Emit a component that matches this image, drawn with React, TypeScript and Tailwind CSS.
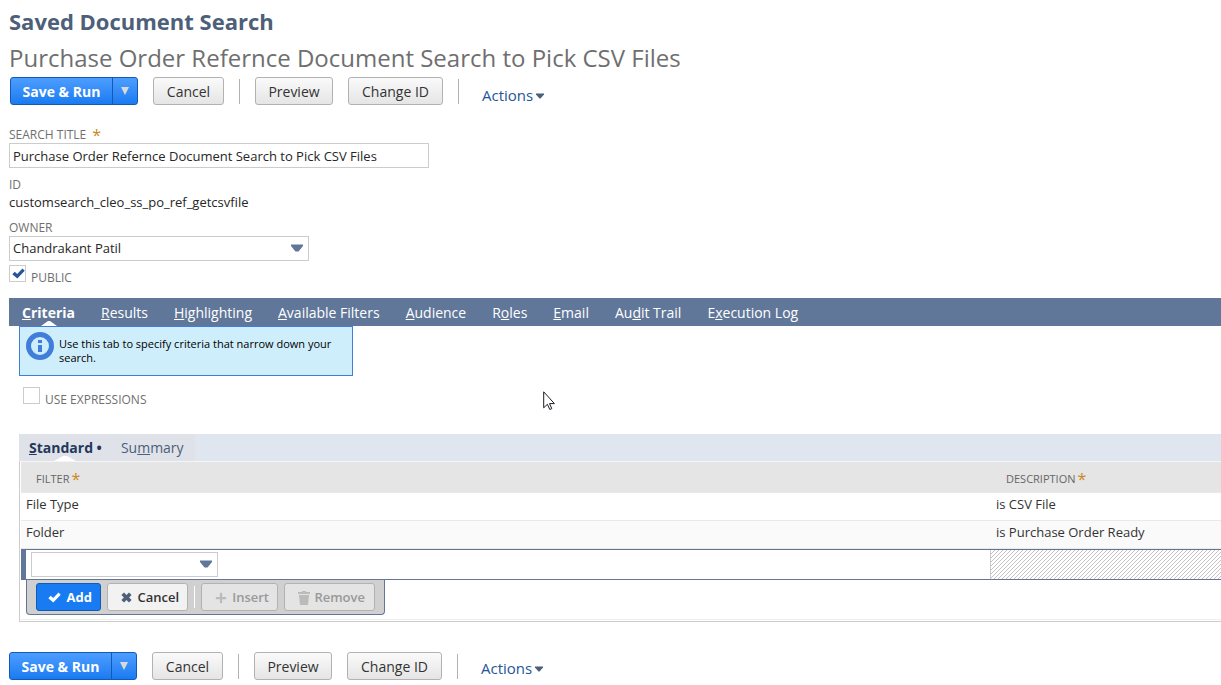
import React from 'react';
import { FaPlus } from 'react-icons/fa';

const tabs = [
  { before: '', key: 'C', after: 'riteria' },
  { before: '', key: 'R', after: 'esults' },
  { before: '', key: 'H', after: 'ighlighting' },
  { before: '', key: 'A', after: 'vailable Filters' },
  { before: '', key: 'A', after: 'udience' },
  { before: 'R', key: 'o', after: 'les' },
  { before: '', key: 'E', after: 'mail' },
  { before: 'Au', key: 'd', after: 'it Trail' },
  { before: 'E', key: 'x', after: 'ecution Log' },
];

const filters = [
  { filter: 'File Type', description: 'is CSV File' },
  { filter: 'Folder', description: 'is Purchase Order Ready' },
];

function CheckIcon({ className }: { className?: string }) {
  return (
    <svg width="13" height="11" viewBox="0 0 13 11" className={className}>
      <path d="M0.3 6.2L2.8 3.7l2.4 2.4L10.5 0.6 12.7 2.7 5.3 10.4z" fill="currentColor" />
    </svg>
  );
}

function CrossIcon() {
  return (
    <svg width="11" height="11" viewBox="0 0 11 11" className="text-[#4d5f79]">
      <path
        d="M3 0.4L5.5 2.9 8 0.4 10.6 3 8.1 5.5 10.6 8 8 10.6 5.5 8.1 3 10.6 0.4 8 2.9 5.5 0.4 3z"
        fill="currentColor"
      />
    </svg>
  );
}

function TrashIcon() {
  return (
    <svg width="12" height="14" viewBox="0 0 12 14" className="text-[#bbb]">
      <path d="M4 0h4v1h4v2H0V1h4zM1 4h10l-1 10H2z" fill="currentColor" />
    </svg>
  );
}

function GreyButton({ children, className }: { children: React.ReactNode; className: string }) {
  return (
    <button
      type="button"
      className={`h-7 pt-px rounded-[3px] border border-[#b2b2b2] bg-linear-to-b from-[#fafafa] to-[#e5e5e5] text-sm leading-none font-medium text-[#333] ${className}`}
    >
      {children}
    </button>
  );
}

function ButtonBar() {
  return (
    <div className="flex items-start">
      <div className="flex h-7 rounded-[3px] border border-[#125ab2] overflow-hidden bg-linear-to-b from-[#4c9dff] to-[#187bf2] text-white">
        <button type="button" className="w-[101px] pt-px text-sm leading-none font-bold">
          Save &amp; Run
        </button>
        <button
          type="button"
          aria-label="More save options"
          className="w-[25px] flex items-center justify-center border-l border-[#125ab2]"
        >
          <svg width="8" height="8" viewBox="0 0 8 8">
            <path d="M0 0h8L4 8z" fill="#d9d9d9" />
          </svg>
        </button>
      </div>
      <div className="ml-[15px]">
        <GreyButton className="min-w-[71px]">Cancel</GreyButton>
      </div>
      <div className="mx-[15px] mt-0.5 w-px h-[25px] bg-[#b2b2b2]" />
      <GreyButton className="min-w-[78px]">Preview</GreyButton>
      <div className="ml-[15px]">
        <GreyButton className="min-w-[95px]">Change ID</GreyButton>
      </div>
      <div className="ml-[15px] mt-0.5 w-px h-[25px] bg-[#b2b2b2]" />
    </div>
  );
}

function ActionsLink() {
  return (
    <a href="#actions" className="ml-[23px] flex items-center gap-[3px] text-[15px] leading-5 font-medium text-[#255599]">
      Actions
      <svg width="8" height="6" viewBox="0 0 8 6" className="mt-0.5">
        <path d="M0 0.5h8v1L4.5 5.5h-1L0 1.5z" fill="#4d5f79" />
      </svg>
    </a>
  );
}

function SelectArrow() {
  return (
    <svg
      width="12"
      height="8"
      viewBox="0 0 12 8"
      className="absolute right-1.5 top-2 pointer-events-none"
    >
      <path d="M0 0.5h12v1.5L7.5 7.5h-3L0 2z" fill="#607799" />
    </svg>
  );
}

function Required() {
  return <span className="text-base leading-none text-[#cc8822]">*</span>;
}

function InfoIcon() {
  return (
    <svg width="28" height="28" viewBox="0 0 28 28" className="shrink-0">
      <circle cx="14" cy="14" r="11.5" fill="none" stroke="#417ed9" strokeWidth="5" />
      <path d="M12 8h4v3h-4zM12 13h4v7h-4z" fill="#417ed9" />
    </svg>
  );
}

function Pointer() {
  return (
    <svg width="12" height="20" viewBox="0 0 12 20" className="fixed left-[543px] top-[391px] pointer-events-none">
      <path
        d="M0.7 0.8v16l3.7-3.5 2.4 5.2 2-0.9-2.3-5h4.9z"
        fill="#fff"
        stroke="#1c1c28"
        strokeWidth="1"
      />
    </svg>
  );
}

export default function App() {
  return (
    <div className="pl-[9px] pt-2 bg-white overflow-hidden text-[13px] text-[#262626] font-['Open_Sans','Noto_Sans',sans-serif]">
      <h1 className="text-[22px] leading-[26px] font-bold text-[#4d5f79]">Saved Document Search</h1>
      <h2 className="mt-2 text-2xl leading-8 text-[#6f6f6f]">
        Purchase Order Refernce Document Search to Pick CSV Files
      </h2>
      <div className="mt-[3px] ml-px flex items-center">
        <ButtonBar />
        <div className="pt-2">
          <ActionsLink />
        </div>
      </div>

      <form className="mt-[22px]" onSubmit={e => e.preventDefault()}>
        <label htmlFor="title" className="flex items-center gap-1.5 h-4 text-xs text-[#6f6f6f]">
          SEARCH TITLE <Required />
        </label>
        <input
          id="title"
          type="text"
          defaultValue="Purchase Order Refernce Document Search to Pick CSV Files"
          className="block w-[420px] h-[25px] px-[3px] border border-[#ccc] bg-white"
        />
        <div className="mt-[9px] h-4 text-xs leading-4 text-[#6f6f6f]">ID</div>
        <div className="h-[18px] leading-[18px]">customsearch_cleo_ss_po_ref_getcsvfile</div>
        <label htmlFor="owner" className="mt-[9px] block h-4 text-xs leading-4 text-[#6f6f6f]">
          OWNER
        </label>
        <div className="relative w-[300px]">
          <select
            id="owner"
            className="block w-full h-[25px] pt-px px-[3px] border border-[#ccc] bg-white appearance-none"
          >
            <option>Chandrakant Patil</option>
          </select>
          <SelectArrow />
        </div>
        <label className="relative mt-1 flex items-start gap-[5px] text-xs text-[#6f6f6f]">
          <input
            type="checkbox"
            defaultChecked
            className="size-[17px] border border-[#ccc] bg-white appearance-none"
          />
          <CheckIcon className="absolute left-[3px] top-[3px] text-[#255599]" />
          <span className="mt-[5px] leading-4">PUBLIC</span>
        </label>
      </form>

      <nav className="mt-3 flex gap-[26px] h-7 pl-[13px] bg-[#607799] text-sm text-white">
        {tabs.map((tab, i) => (
          <a
            key={tab.after}
            href="#tab"
            className={i === 0 ? 'relative leading-[29px] font-bold' : 'leading-[29px]'}
          >
            {tab.before}
            <span className="underline">{tab.key}</span>
            {tab.after}
            {i === 0 && (
              <svg width="16" height="5" viewBox="0 0 16 5" className="absolute bottom-0 left-[19px]">
                <path d="M0 5L7 0h2l7 5z" fill="#fff" />
              </svg>
            )}
          </a>
        ))}
      </nav>

      <div className="pl-2.5">
        <div className="flex gap-[5px] w-[334px] h-[50px] pl-1.5 pt-[5px] border border-[#417ed9] bg-[#cfeefc] text-[11px] leading-[14px] text-black">
          <InfoIcon />
          <p className="pt-[5px]">Use this tab to specify criteria that narrow down your search.</p>
        </div>

        <label className="mt-[11px] ml-1 flex items-start gap-[5px] text-xs text-[#6f6f6f]">
          <input type="checkbox" className="size-[17px] border border-[#ccc] bg-white appearance-none" />
          <span className="mt-[5px] leading-4">USE EXPRESSIONS</span>
        </label>

        <div className="mt-[26px] h-[27px] bg-[#dfe6ef] text-sm leading-7 text-[#4d5f79]">
          <div className="flex w-44 h-full pl-2.5 gap-[19px] bg-[#dfe2e9]">
            <a href="#standard" className="relative shrink-0 font-bold text-[#24385b]">
              <span className="underline">S</span>tandard •
              <svg width="22" height="5" viewBox="0 0 22 5" className="absolute bottom-0 left-[25px]">
                <path d="M0 5L9 0h4l9 5z" fill="#fff" />
              </svg>
            </a>
            <a href="#summary" className="shrink-0">
              Su<span className="underline">m</span>mary
            </a>
          </div>
        </div>

        <div className="pl-px pb-px border-l border-b border-[#ccc]">
          <table className="w-full table-fixed border-separate border-spacing-0 text-left text-[#333]">
            <colgroup>
              <col />
              <col className="w-[231px]" />
            </colgroup>
            <thead>
              <tr className="h-8 bg-[#e5e5e5] text-[11px] text-[#666]">
                <th className="border-y border-t-[#f5f5f5] border-b-[#e9e9e9] pl-[15px] pt-1 font-normal">
                  <span className="flex items-center gap-0.5">FILTER <Required /></span>
                </th>
                <th className="border-y border-t-[#f5f5f5] border-b-[#e9e9e9] pl-4 pt-1 font-normal">
                  <span className="flex items-center gap-0.5">DESCRIPTION <Required /></span>
                </th>
              </tr>
            </thead>
            <tbody>
              {filters.map((row, i) => (
                <tr key={row.filter} className={i % 2 === 0 ? 'h-7' : 'h-7 bg-[#fafafa]'}>
                  <td className="border-b border-[#e9e9e9] pl-[5px] pb-1.5 leading-5">{row.filter}</td>
                  <td className="border-b border-[#e9e9e9] pl-1.5 pb-1.5 leading-5">{row.description}</td>
                </tr>
              ))}
              <tr className="h-[31px]">
                <td className="border-y border-l-[5px] border-[#607799] pl-[5px]">
                  <div className="relative w-[187px]">
                    <select
                      aria-label="Filter"
                      className="block w-full h-[25px] px-[3px] border border-[#ccc] bg-white appearance-none"
                    >
                      <option></option>
                    </select>
                    <SelectArrow />
                  </div>
                </td>
                <td className="border-y border-[#607799] p-0">
                  <svg width="100%" height="29" className="block border-l border-[#ccc]">
                    <defs>
                      <pattern id="hatch" width="4" height="4" patternUnits="userSpaceOnUse">
                        <path d="M3 0h1v1H3zM2 1h1v1H2zM1 2h1v1H1zM0 3h1v1H0z" fill="#c4c4c4" />
                      </pattern>
                    </defs>
                    <rect width="100%" height="29" fill="url(#hatch)" />
                  </svg>
                </td>
              </tr>
            </tbody>
          </table>

          <div className="ml-[5px] flex items-start w-[359px] h-[35px] pl-[9px] pt-[3px] rounded-b-[4px] border border-t-0 border-[#607799] bg-[#d0d0d0] text-[13px]">
            <button
              type="button"
              className="flex items-center justify-end gap-1.5 w-[65px] h-7 pt-px pr-2 rounded-[3px] border border-[#125ab2] bg-[#187bf2] font-bold text-white"
            >
              <CheckIcon /> Add
            </button>
            <button
              type="button"
              className="ml-1.5 flex items-center justify-end gap-[5px] w-[81px] h-7 pt-px pr-2 rounded-[3px] border border-[#b2b2b2] bg-[#f2f2f2] font-semibold text-[#333]"
            >
              <CrossIcon /> Cancel
            </button>
            <div className="mx-1.5 mt-[3px] w-px h-[22px] bg-white" />
            <button
              type="button"
              disabled
              className="flex items-center justify-end gap-[5px] w-[77px] h-7 pt-px pr-2 rounded-[3px] border border-[#b2b2b2] bg-[#e4e4e4] font-semibold text-[#999]"
            >
              <FaPlus className="size-3 text-[#bbb]" /> Insert
            </button>
            <button
              type="button"
              disabled
              className="ml-1.5 flex items-center justify-end gap-1 w-[91px] h-7 pt-px pr-[9px] rounded-[3px] border border-[#b2b2b2] bg-[#e4e4e4] font-semibold text-[#999]"
            >
              <TrashIcon /> Remove
            </button>
          </div>
          <div className="mt-1 h-px bg-[#eee]" />
        </div>
      </div>

      <div className="mt-[30px] flex items-center">
        <ButtonBar />
        <div className="pt-1">
          <ActionsLink />
        </div>
      </div>
      <Pointer />
    </div>
  );
}
